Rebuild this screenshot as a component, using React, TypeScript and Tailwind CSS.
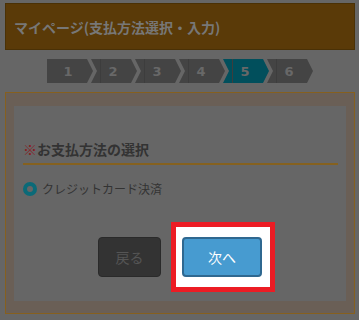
const steps = [1, 2, 3, 4, 5, 6];

function StepBar({ current }: { current: number }) {
  return (
    <svg width="266" height="24" viewBox="0 0 266 24" className="block">
      {steps.map((n, i) => {
        const x = i * 44;
        const pts =
          i === 0
            ? `${x},0 ${x + 40},0 ${x + 46},12 ${x + 40},24 ${x},24`
            : `${x},0 ${x + 40},0 ${x + 46},12 ${x + 40},24 ${x},24 ${x + 6},12`;
        return (
          <g key={n}>
            <polygon points={pts} fill={n === current ? "#014f5c" : "#444444"} />
            {i > 0 ? <line x1={x + 9.5} y1="0" x2={x + 9.5} y2="24" stroke="#3d3d3d" /> : null}
            <text
              x={x + (i === 0 ? 21 : 22)}
              y="17"
              textAnchor="middle"
              fontFamily="'DejaVu Sans', sans-serif"
              fontWeight="bold"
              fontSize="13"
              fill="#686868"
            >
              {n}
            </text>
          </g>
        );
      })}
    </svg>
  );
}

export default function App() {
  return (
    <div
      className="h-[320px] w-[359px] overflow-hidden bg-[#666666] px-[5px] pt-[3px]"
      style={{ fontFamily: "'Noto Sans CJK JP', 'Noto Sans', sans-serif" }}
    >
      <div className="flex h-[47px] w-[350px] items-center border border-[#4a3106] bg-[#5a3a08] pl-[8px]">
        <h1 className="text-[14px] font-bold leading-none text-[#777777]">マイページ(支払方法選択・入力)</h1>
      </div>

      <div className="mt-[9px] flex pl-[42px]">
        <StepBar current={5} />
      </div>

      <div className="mt-[9px] h-[222px] w-[350px] border border-[#86601f] bg-[#6a5f56] px-[8px] pb-[11px] pt-[13px]">
        <div className="h-[195px] bg-[#666666] px-[9px] pr-[8px]">
          <div className="border-b-2 border-[#85611f] pb-[4px] pt-[33px]">
            <p className="text-[14px] font-bold leading-[20px] text-[#333333]">
              <span className="text-[#8a1a1f]">※</span>お支払方法の選択
            </p>
          </div>

          <label className="mt-[14px] flex h-[20px] items-center gap-[5px]">
            <span className="flex h-[14px] w-[14px] items-center justify-center rounded-full bg-[#0b6a78]">
              <span className="h-[6px] w-[6px] rounded-full bg-[#666666]" />
            </span>
            <span className="text-[12px] leading-none text-[#333333]">クレジットカード決済</span>
          </label>

          <div className="mt-[38px] flex justify-center gap-[21px] pr-[1px]">
            <button
              type="button"
              className="h-[40px] w-[63px] rounded-[4px] border border-[#2a2a2a] bg-[#333333] text-[14px] text-[#555555]"
            >
              戻る
            </button>
            <div className="relative">
              <div className="absolute -bottom-[15px] -left-[11px] -right-[13px] -top-[15px] border-[5px] border-[#ec1c24] bg-white" />
              <button
                type="button"
                className="relative h-[40px] w-[80px] rounded-[4px] border-2 border-[#2f6890] bg-[#479bd0] text-[14px] text-white"
              >
                次へ
              </button>
            </div>
          </div>
        </div>
      </div>
    </div>
  );
}
